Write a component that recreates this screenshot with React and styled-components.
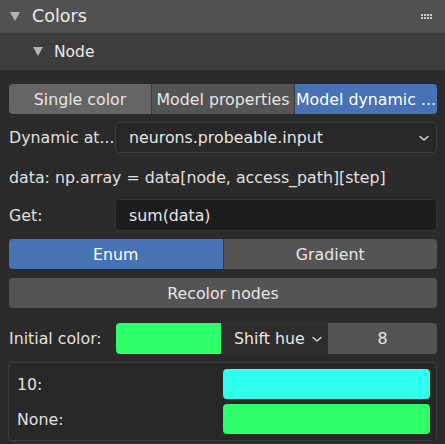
import React from 'react'
import styled, { createGlobalStyle } from 'styled-components'

const Global = createGlobalStyle`
  html, body { margin: 0; padding: 0; background: #2b2b2b; }
  body { font-family: "DejaVu Sans", "Liberation Sans", sans-serif; color: #e6e6e6; }
`

const Panel = styled.div`
  width: 445px;
  height: 444px;
  background: #2b2b2b;
  overflow: hidden;
`

const Header = styled.div`
  height: 32px;
  display: flex;
  align-items: center;
  background: #515151;
  border-bottom: 1px solid #474747;
  padding-left: 10px;
  padding-right: 13px;
  font-size: 17.5px;
  color: #ececec;
`

const SubHeader = styled.div`
  height: 37px;
  display: flex;
  align-items: center;
  background: #3d3d3d;
  padding-left: 33px;
  font-size: 15.5px;
  color: #e8e8e8;
`

const Arrow = styled.span`
  width: 0;
  height: 0;
  border-left: 5px solid transparent;
  border-right: 5px solid transparent;
  border-top: 9px solid #b4b4b4;
  margin-right: ${p => p.gap}px;
`

const Grip = styled.div`
  margin-left: auto;
  display: grid;
  grid-template-columns: repeat(4, 2px);
  grid-gap: 1px 1px;
`

const Dot = styled.span`
  width: 2px;
  height: 2px;
  background: #cfcfcf;
`

const Body = styled.div`
  padding: 14px 8px 0 9px;
  display: flex;
  flex-direction: column;
`

const Row = styled.div`
  display: flex;
  height: ${p => p.h || 30}px;
  margin-bottom: ${p => p.mb || 0}px;
  align-items: center;
  font-size: 15.8px;
`

const Seg = styled.div`
  flex: ${p => p.grow || 1};
  height: 100%;
  display: flex;
  align-items: center;
  justify-content: center;
  background: ${p => p.bg || '#545454'};
  color: ${p => (p.active ? '#ffffff' : '#e6e6e6')};
  border-right: 1px solid #3a3a3a;
  white-space: nowrap;
  overflow: hidden;
  &:first-child { border-radius: 4px 0 0 4px; }
  &:last-child { border-radius: 0 4px 4px 0; border-right: none; }
  &:only-child { border-radius: 4px; }
`

const Label = styled.div`
  width: ${p => p.w || 106}px;
  flex: none;
  color: #e0e0e0;
  white-space: nowrap;
`

const Field = styled.div`
  flex: 1;
  height: 100%;
  display: flex;
  align-items: center;
  padding: 0 4px 0 13px;
  background: ${p => p.bg};
  border: 1px solid ${p => p.border};
  border-radius: 4px;
  box-sizing: border-box;
  color: #e6e6e6;
`

const Chevron = styled.svg`
  margin-left: auto;
  flex: none;
`

const Text = styled.div`
  font-size: 15.8px;
  color: #e0e0e0;
  height: 30px;
  display: flex;
  align-items: center;
  margin: 9px 0 7px;
`

const Swatch = styled.div`
  height: 100%;
  background: ${p => p.color};
  width: ${p => p.w}px;
  flex: none;
  border-radius: ${p => p.r || '4px'};
`

const Dropdown = styled.div`
  width: 107px;
  flex: none;
  height: 100%;
  display: flex;
  align-items: center;
  box-sizing: border-box;
  padding: 0 3px 0 13px;
  background: #2d2d2d;
  color: #e6e6e6;
  border-top: 1px solid #333;
  border-bottom: 1px solid #333;
`

const Num = styled.div`
  flex: 1;
  height: 100%;
  display: flex;
  align-items: center;
  justify-content: center;
  background: #545454;
  border-radius: 0 4px 4px 0;
  color: #e6e6e6;
`

const Box = styled.div`
  border: 1px solid #3c3c3c;
  border-radius: 4px;
  background: #282828;
  padding: 6px 6px 6px 8px;
  display: flex;
  flex-direction: column;
  gap: 5px;
  margin-left: -1px;
`

const BoxRow = styled.div`
  display: flex;
  height: 30px;
  align-items: center;
  font-size: 15.8px;
  color: #e0e0e0;
`

const BoxLabel = styled.div`
  flex: 1;
`

function Down() {
  return (
    <Chevron width={16} height={12} viewBox="0 0 16 12">
      <path d="M4 4.5 L8 8 L12 4.5" stroke="#d8d8d8" strokeWidth="1.5" fill="none" strokeLinecap="round" strokeLinejoin="round" />
    </Chevron>
  )
}

export default function App() {
  return (
    <Panel>
      <Global />
      <Header>
        <Arrow gap={12} />
        Colors
        <Grip>
          {Array.from({ length: 8 }).map((_, i) => <Dot key={i} />)}
        </Grip>
      </Header>
      <SubHeader>
        <Arrow gap={11} />
        Node
      </SubHeader>
      <Body>
        <Row mb={8}>
          <Seg bg="#656565">Single color</Seg>
          <Seg>Model properties</Seg>
          <Seg bg="#4772b3" active>Model dynamic ...</Seg>
        </Row>
        <Row h={31}>
          <Label>Dynamic at...</Label>
          <Field bg="#282828" border="#3d3d3d">
            neurons.probeable.input
            <Down />
          </Field>
        </Row>
        <Text>data: np.array = data[node, access_path][step]</Text>
        <Row h={32} mb={8}>
          <Label>Get:</Label>
          <Field bg="#1d1d1d" border="#363636">sum(data)</Field>
        </Row>
        <Row mb={9}>
          <Seg bg="#4772b3" active>Enum</Seg>
          <Seg>Gradient</Seg>
        </Row>
        <Row mb={15}>
          <Seg>Recolor nodes</Seg>
        </Row>
        <Row h={31} mb={8}>
          <Label w={107}>Initial color:</Label>
          <Swatch color="#2dff6a" w={105} r="4px 0 0 4px" />
          <Dropdown>
            Shift hue
            <Down />
          </Dropdown>
          <Num>8</Num>
        </Row>
        <Box>
          <BoxRow>
            <BoxLabel>10:</BoxLabel>
            <Swatch color="#2effee" w={207} />
          </BoxRow>
          <BoxRow>
            <BoxLabel>None:</BoxLabel>
            <Swatch color="#2dff6a" w={207} />
          </BoxRow>
        </Box>
      </Body>
    </Panel>
  )
}
